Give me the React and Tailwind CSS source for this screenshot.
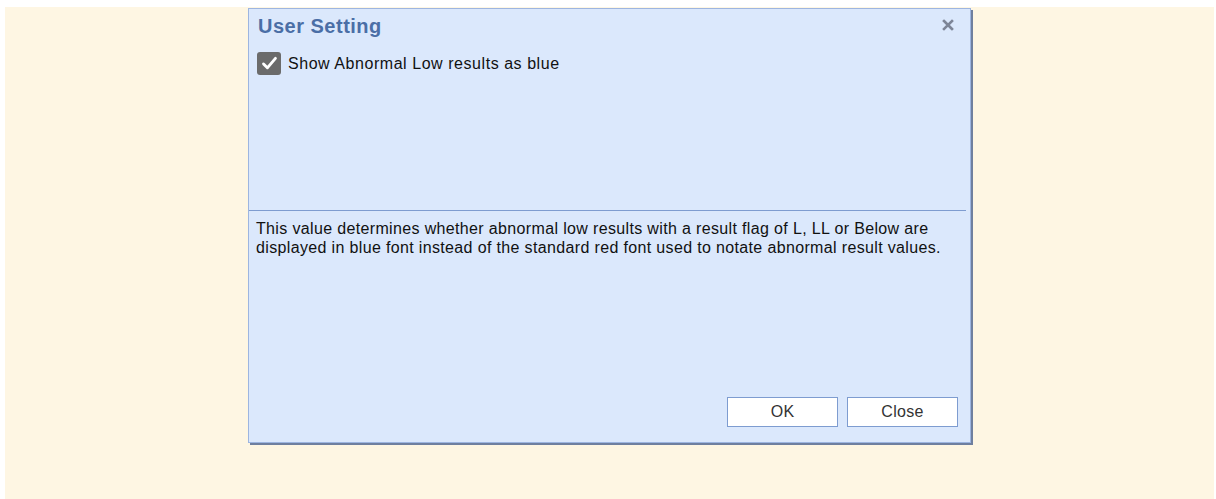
import React from "react";

function CheckIcon() {
  return (
    <svg viewBox="0 0 24 24" className="h-[19px] w-[19px]" fill="none" stroke="white" strokeWidth="3.6" strokeLinecap="round" strokeLinejoin="round">
      <path d="M4.5 12.5l4.8 5L19.5 5.5" />
    </svg>
  );
}

function CloseIcon() {
  return (
    <svg viewBox="0 0 12 12" className="h-[12px] w-[12px]" fill="none" stroke="#7d8597" strokeWidth="2.6" strokeLinecap="square">
      <path d="M2 2l8 8M10 2l-8 8" />
    </svg>
  );
}

export default function App() {
  return (
    <div className="min-h-[499px] w-[1216px] bg-white pl-[5px] pt-[7px] pr-[2px]" style={{ fontFamily: '"Liberation Sans", Arial, sans-serif' }}>
      <div className="h-[492px] bg-[#fef6e3] pt-[1px]">
        <div className="ml-[243px] flex h-[435px] w-[723px] flex-col border border-[#9db5e0] bg-[#dbe8fc] shadow-[2px_2px_0_#6f7f9f]">
          {/* header */}
          <div className="flex items-start justify-between pl-[9px] pr-[16px] pt-[5px]">
            <h1 className="text-[20px] font-bold leading-[24px] tracking-[0.5px] text-[#4a6ea6]">User Setting</h1>
            <span className="mt-[5px]"><CloseIcon /></span>
          </div>
          {/* option area */}
          <div className="h-[172px] px-[8px] pt-[14px]">
            <label className="flex items-center gap-[7px]">
              <span className="flex h-[23px] w-[24px] items-center justify-center rounded-[3px] bg-[#6b6b6b]">
                <CheckIcon />
              </span>
              <span className="text-[16px] leading-[20px] tracking-[0.55px] text-[#111]">Show Abnormal Low results as blue</span>
            </label>
          </div>
          <div className="mr-[4px] h-px bg-[#7e9cd0]" />
          <p className="px-[7px] pt-[8px] text-[16px] leading-[19px] tracking-[0.35px] text-[#111]">
            This value determines whether abnormal low results with a result flag of L, LL or Below are
            <br />
            displayed in blue font instead of the standard red font used to notate abnormal result values.
          </p>
          <div className="mt-auto flex justify-end gap-[9px] pb-[15px] pr-[12px]">
            <button className="h-[30px] w-[111px] border border-[#7e9cd0] bg-white text-[16px] tracking-[0.3px] text-[#333]">OK</button>
            <button className="h-[30px] w-[111px] border border-[#7e9cd0] bg-white text-[16px] tracking-[0.3px] text-[#333]">Close</button>
          </div>
        </div>
      </div>
    </div>
  );
}
